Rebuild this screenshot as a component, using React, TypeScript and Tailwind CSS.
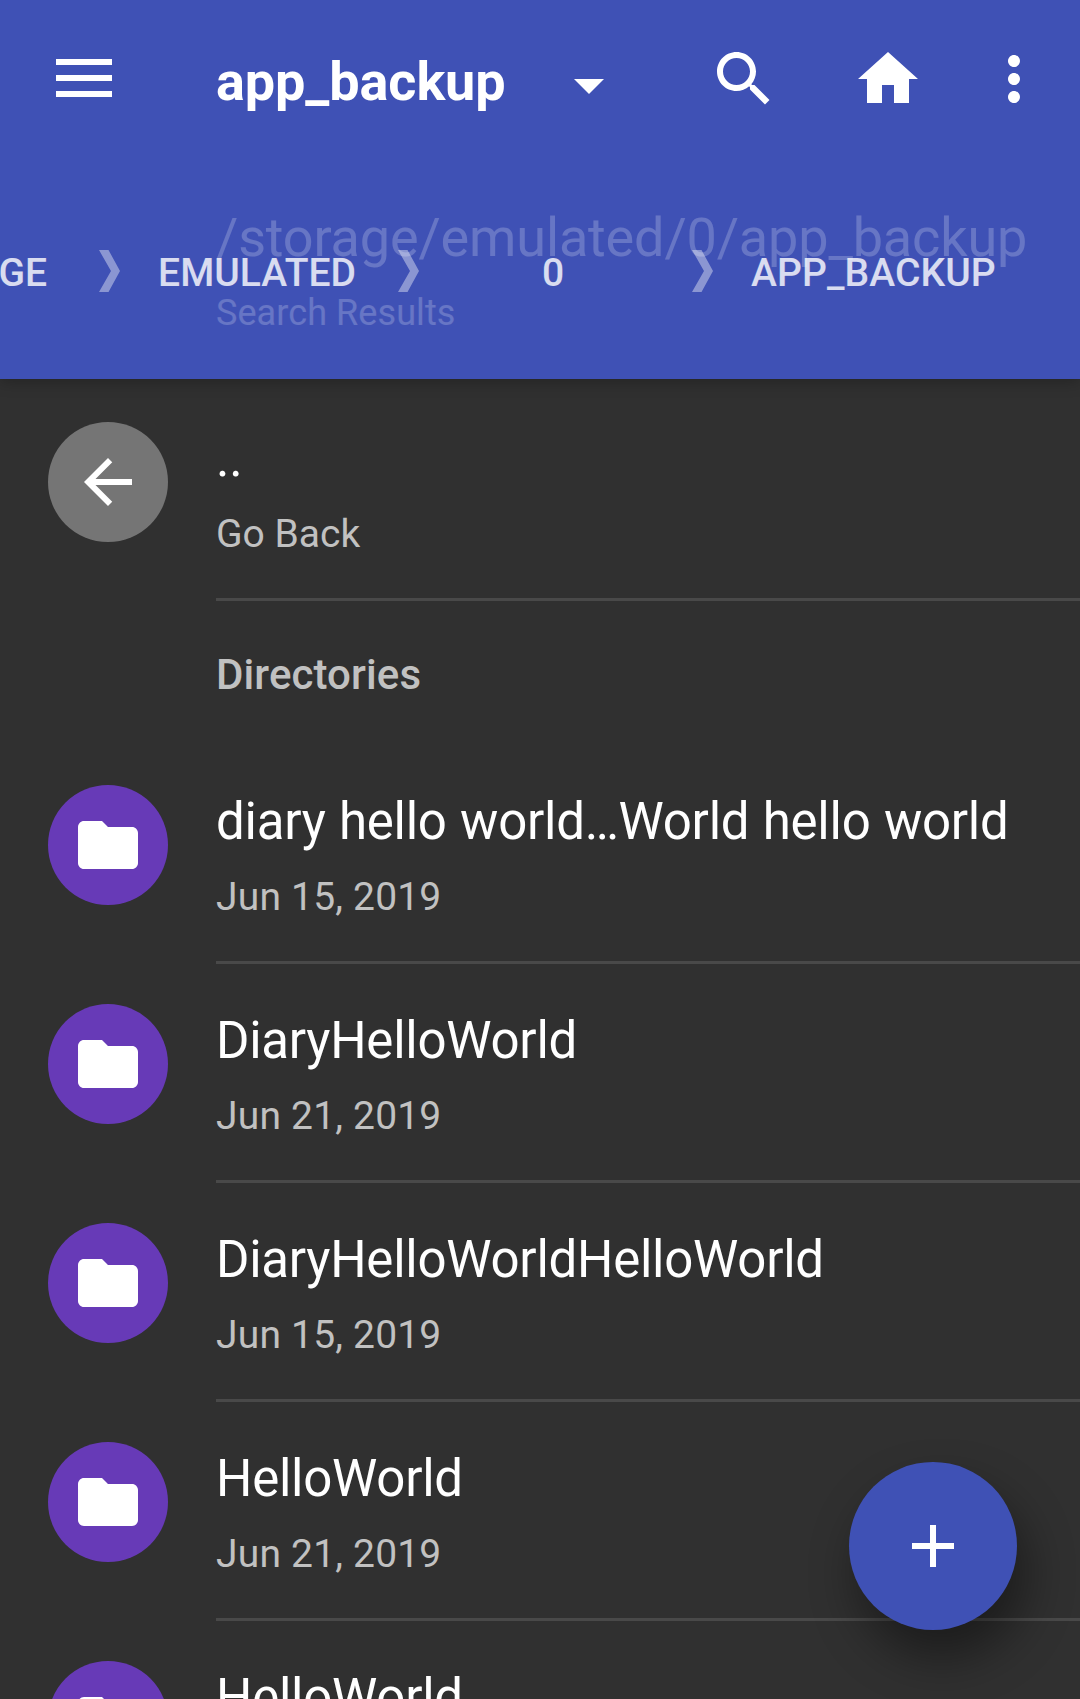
import React from "react";

const folders = [
  { name: "diary hello world…World hello world", date: "Jun 15, 2019" },
  { name: "DiaryHelloWorld", date: "Jun 21, 2019" },
  { name: "DiaryHelloWorldHelloWorld", date: "Jun 15, 2019" },
  { name: "HelloWorld", date: "Jun 21, 2019" },
  { name: "HelloWorld", date: "Jun 21, 2019" },
];

const paths = {
  search:
    "M15.5 14h-.79l-.28-.27C15.41 12.59 16 11.11 16 9.5 16 5.91 13.09 3 9.5 3S3 5.91 3 9.5 5.91 16 9.5 16c1.61 0 3.09-.59 4.23-1.57l.27.28v.79l5 4.99L20.49 19l-4.99-5zm-6 0C7.01 14 5 11.99 5 9.5S7.01 5 9.5 5 14 7.01 14 9.5 11.99 14 9.5 14z",
  home: "M10 20v-6h4v6h5v-8h3L12 3 2 12h3v8z",
  more: "M12 8c1.1 0 2-.9 2-2s-.9-2-2-2-2 .9-2 2 .9 2 2 2zm0 2c-1.1 0-2 .9-2 2s.9 2 2 2 2-.9 2-2-.9-2-2-2zm0 6c-1.1 0-2 .9-2 2s.9 2 2 2 2-.9 2-2-.9-2-2-2z",
  back: "M20 11H7.83l5.59-5.59L12 4l-8 8 8 8 1.41-1.41L7.83 13H20v-2z",
  folder:
    "M10 4H4c-1.1 0-1.99.9-1.99 2L2 18c0 1.1.9 2 2 2h16c1.1 0 2-.9 2-2V8c0-1.1-.9-2-2-2h-8l-2-2z",
  add: "M19 13h-6v6h-2v-6H5v-2h6V5h2v6h6v2z",
};

function Icon({ d, className = "" }: { d: string; className?: string }) {
  return (
    <svg viewBox="0 0 24 24" className={"size-[72px] shrink-0 fill-white " + className}>
      <path d={d} />
    </svg>
  );
}

function Chevron() {
  return (
    <svg viewBox="0 0 21 42" className="h-[42px] w-[21px] shrink-0 fill-white/40">
      <path d="M0 0H9.5L21 21L9.5 42H0L12 21Z" />
    </svg>
  );
}

type RowProps = { icon: string; color: string; name: string; detail: string; detailSpacing: string };

function Row({ icon, color, name, detail, detailSpacing }: RowProps) {
  return (
    <div className="flex h-[219px] shrink-0 pl-12">
      <div className={"mt-10 flex size-[120px] shrink-0 items-center justify-center rounded-full " + color}>
        <Icon d={icon} />
      </div>
      <div className="ml-12 flex-1 border-b-[3px] border-[#494949] pt-[47px]">
        <div className="h-[60px] text-[51px] leading-[60px] tracking-[-0.25px] text-white [word-spacing:1px]">
          {name}
        </div>
        <div className={"mt-[22px] text-[39px] leading-[46px] text-[#c1c1c1] " + detailSpacing}>{detail}</div>
      </div>
    </div>
  );
}

export default function App() {
  return (
    <div className="relative flex h-[1699px] w-[1080px] flex-col overflow-hidden whitespace-nowrap bg-[#303030] font-['Roboto',sans-serif]">
      <header className="relative z-10 h-[379px] shrink-0 bg-[#3f51b5] shadow-[0_3px_14px_rgba(0,0,0,0.25)]">
        <div className="flex h-[158px] items-center pl-14">
          <div className="flex w-14 flex-col gap-[10px] pb-[2px]">
            <div className="h-[6px] bg-white" />
            <div className="h-[6px] bg-white" />
            <div className="h-[6px] bg-white" />
          </div>
          <div className="ml-[104px] w-[358px] pt-[5px] text-[54px] font-bold leading-[64px] tracking-[-0.1px] text-white">
            app_backup
          </div>
          <svg viewBox="0 0 30 15" className="mt-[15px] h-[15px] w-[30px] fill-white">
            <path d="M0 0H30L15 15Z" />
          </svg>
          <Icon d={paths.search} className="ml-[104px]" />
          <Icon d={paths.home} className="ml-[72px]" />
          <Icon d={paths.more} className="ml-[54px]" />
        </div>
        <div className="absolute left-[216px] top-[206px] text-white/[0.21]">
          <div className="text-[54px] leading-[64px] tracking-[-0.15px]">/storage/emulated/0/app_backup</div>
          <div className="mt-[21px] text-[36px] leading-[44px] tracking-[0.08px]">Search Results</div>
        </div>
        <div className="relative mt-[92px] flex h-[42px] items-center text-[39px] font-medium leading-[46px] text-white/80">
          <div className="flex w-[99px] shrink-0 justify-end overflow-hidden pr-[52px] pt-[3px]">STORAGE</div>
          <Chevron />
          <div className="w-[278px] shrink-0 pr-1 pt-[3px] text-center">EMULATED</div>
          <Chevron />
          <div className="w-[273px] shrink-0 pr-[5px] pt-[3px] text-center">0</div>
          <Chevron />
          <div className="pl-[38px] pt-[3px] tracking-[0.1px]">APP_BACKUP</div>
        </div>
      </header>
      <main className="flex flex-col pt-[3px]">
        <Row icon={paths.back} color="bg-[#757575]" name=".." detail="Go Back" detailSpacing="tracking-normal" />
        <div className="flex h-36 shrink-0 items-center pl-[216px] pt-[2px] text-[42px] font-medium tracking-[0.1px] text-[#c1c1c1]">
          Directories
        </div>
        {folders.map((f, i) => (
          <Row
            key={i}
            icon={paths.folder}
            color="bg-[#673ab7]"
            name={f.name}
            detail={f.date}
            detailSpacing="tracking-[0.2px]"
          />
        ))}
      </main>
      <button className="absolute left-[849px] top-[1462px] z-20 flex size-[168px] items-center justify-center rounded-full bg-[#3f51b5] shadow-[9px_27px_48px_rgba(0,0,0,0.42)]">
        <Icon d={paths.add} />
      </button>
    </div>
  );
}
